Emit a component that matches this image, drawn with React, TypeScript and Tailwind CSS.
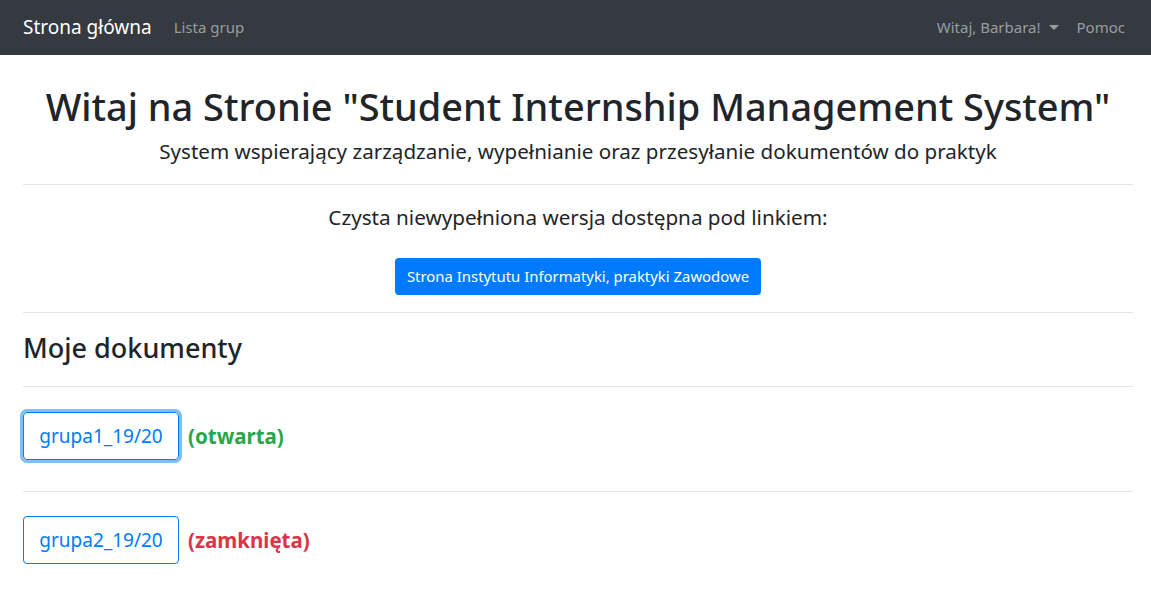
import React from "react";

export default function App() {
  const font = { fontFamily: '"Noto Sans", "Open Sans", Arial, sans-serif' };
  return (
    <div className="min-h-[613px] bg-white text-[#212529]" style={font}>
      <nav className="h-[55px] bg-[#343a40] flex items-center pl-[23px] pr-[26px]">
        <span className="text-white text-[19px] leading-none">Strona główna</span>
        <span className="ml-[22px] text-[15px] text-[#9a9d9f] leading-none">Lista grup</span>
        <div className="ml-auto flex items-center">
          <span className="text-[15px] text-[#9a9d9f] leading-none">Witaj, Barbara!</span>
          <span className="ml-[8px] w-0 h-0 border-l-[5px] border-r-[5px] border-t-[5px] border-l-transparent border-r-transparent border-t-[#9a9d9f]" />
          <span className="ml-[18px] text-[15px] text-[#9a9d9f] leading-none">Pomoc</span>
        </div>
      </nav>
      <main className="pl-[23px] pr-[18px]">
        <h1 className="mt-[27px] text-center text-[37.9px] leading-[48px] font-medium">
          Witaj na Stronie "Student Internship Management System"
        </h1>
        <p className="mt-[6px] text-center text-[20.6px] leading-[30px]">
          System wspierający zarządzanie, wypełnianie oraz przesyłanie dokumentów do praktyk
        </p>
        <hr className="mt-[18px] border-0 border-t border-[#e5e5e5]" />
        <p className="mt-[17px] text-center text-[20.7px] leading-[30px]">
          Czysta niewypełniona wersja dostępna pod linkiem:
        </p>
        <div className="mt-[26px] flex justify-center">
          <button className="h-[37px] px-[12px] rounded-[4px] bg-[#007bff] text-white text-[14.9px]">
            Strona Instytutu Informatyki, praktyki Zawodowe
          </button>
        </div>
        <hr className="mt-[17px] border-0 border-t border-[#e5e5e5]" />
        <h3 className="mt-[18px] text-[27px] leading-[34px] font-medium">Moje dokumenty</h3>
        <hr className="mt-[21px] border-0 border-t border-[#e5e5e5]" />
        <div className="mt-[25px] flex items-center">
          <button className="w-[156px] h-[48px] rounded-[4px] border border-[#007bff] text-[#007bff] text-[19px] shadow-[0_0_0_3px_rgba(0,123,255,0.5)]">
            grupa1_19/20
          </button>
          <span className="ml-[9px] text-[20.5px] font-bold text-[#28a745]">(otwarta)</span>
        </div>
        <hr className="mt-[31px] border-0 border-t border-[#e5e5e5]" />
        <div className="mt-[24px] flex items-center">
          <button className="w-[156px] h-[48px] rounded-[4px] border border-[#007bff] text-[#007bff] text-[19px]">
            grupa2_19/20
          </button>
          <span className="ml-[9px] text-[20.5px] font-bold text-[#dc3545]">(zamknięta)</span>
        </div>
      </main>
    </div>
  );
}
